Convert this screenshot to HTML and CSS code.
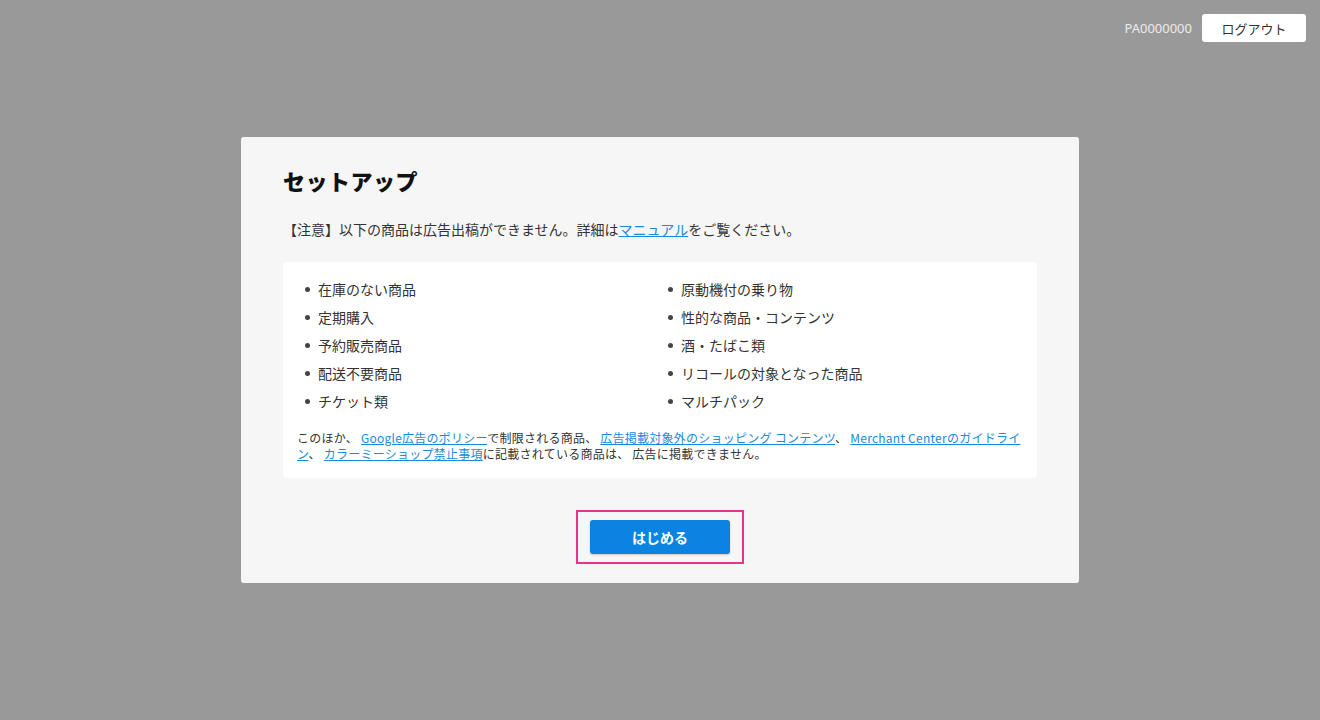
FILE: index.html
```html
<!DOCTYPE html>
<html lang="ja">
<head>
    <meta charset="UTF-8">
    <meta name="viewport" content="width=device-width, initial-scale=1.0">
    <title>セットアップ</title>
    <link rel="stylesheet" href="styles.css">
</head>
<body>
    <div class="topbar">
        <span class="account-id">PA0000000</span>
        <button class="logout-button">ログアウト</button>
    </div>
    <div class="modal">
        <h1>セットアップ</h1>
        <p class="notice">【注意】以下の商品は広告出稿ができません。詳細は<a href="#">マニュアル</a>をご覧ください。</p>
        <div class="item-box">
            <ul class="item-list">
                <li>在庫のない商品</li>
                <li>原動機付の乗り物</li>
                <li>定期購入</li>
                <li>性的な商品・コンテンツ</li>
                <li>予約販売商品</li>
                <li>酒・たばこ類</li>
                <li>配送不要商品</li>
                <li>リコールの対象となった商品</li>
                <li>チケット類</li>
                <li>マルチパック</li>
            </ul>
            <p class="footnote">このほか、 <a href="#">Google広告のポリシー</a>で制限される商品、 <a href="#">広告掲載対象外のショッピング コンテンツ</a>、 <a href="#">Merchant Centerのガイドライン</a>、 <a href="#">カラーミーショップ禁止事項</a>に記載されている商品は、 広告に掲載できません。</p>
        </div>
        <div class="start-row">
            <div class="start-frame">
                <button class="start-button">はじめる</button>
            </div>
        </div>
    </div>
</body>
</html>
```
FILE: styles.css
```css
body {
    margin: 0;
    height: 720px;
    background-color: #999999;
    font-family: "Noto Sans CJK JP", "Noto Sans", sans-serif;
    color: #333;
}
.topbar {
    display: flex;
    justify-content: flex-end;
    align-items: center;
    gap: 10px;
    padding: 14px 14px 0 0;
    height: 28px;
}
.account-id {
    font-family: "Noto Sans", "Noto Sans CJK JP", sans-serif;
    font-size: 13px;
    color: #ececec;
}
.logout-button {
    width: 104px;
    height: 28px;
    background: white;
    border: none;
    border-radius: 3px;
    font-family: inherit;
    font-size: 13px;
    color: #333;
    cursor: pointer;
}
.modal {
    width: 754px;
    margin: 95px auto 0;
    padding: 27px 42px 19px;
    background-color: #f6f6f6;
    border-radius: 3px;
}
.modal h1 {
    margin: 0;
    font-size: 22px;
    line-height: 32px;
    font-weight: 900;
    letter-spacing: 0.5px;
    color: #111;
}
.notice {
    margin: 23px 0 0;
    font-size: 14px;
    line-height: 20px;
    color: #333;
}
a {
    color: #1a8ae0;
    text-decoration: underline;
}
.item-box {
    margin-top: 23px;
    background: white;
    border-radius: 4px;
    padding: 13px 14px 16px;
}
.item-list {
    list-style: none;
    margin: 0;
    padding: 0;
    display: grid;
    grid-template-columns: 1fr 1fr;
}
.item-list li {
    position: relative;
    padding-left: 21px;
    font-size: 14px;
    line-height: 28px;
    color: #333;
}
.item-list li::before {
    content: "";
    position: absolute;
    left: 8px;
    top: 12px;
    width: 5px;
    height: 5px;
    border-radius: 50%;
    background: #444;
}
.footnote {
    margin: 15px 0 0;
    font-size: 12px;
    line-height: 16px;
    letter-spacing: 0.25px;
    color: #333;
}
.start-row {
    display: flex;
    justify-content: center;
    margin-top: 32px;
}
.start-frame {
    border: 2px solid #e8338a;
    padding: 8px 12px;
}
.start-button {
    display: block;
    width: 140px;
    height: 34px;
    background-color: #0a84e0;
    color: white;
    border: none;
    border-radius: 3px;
    font-family: inherit;
    font-size: 14px;
    font-weight: bold;
    box-shadow: 0 1px 2px rgba(0, 0, 0, 0.2);
    cursor: pointer;
}
```
